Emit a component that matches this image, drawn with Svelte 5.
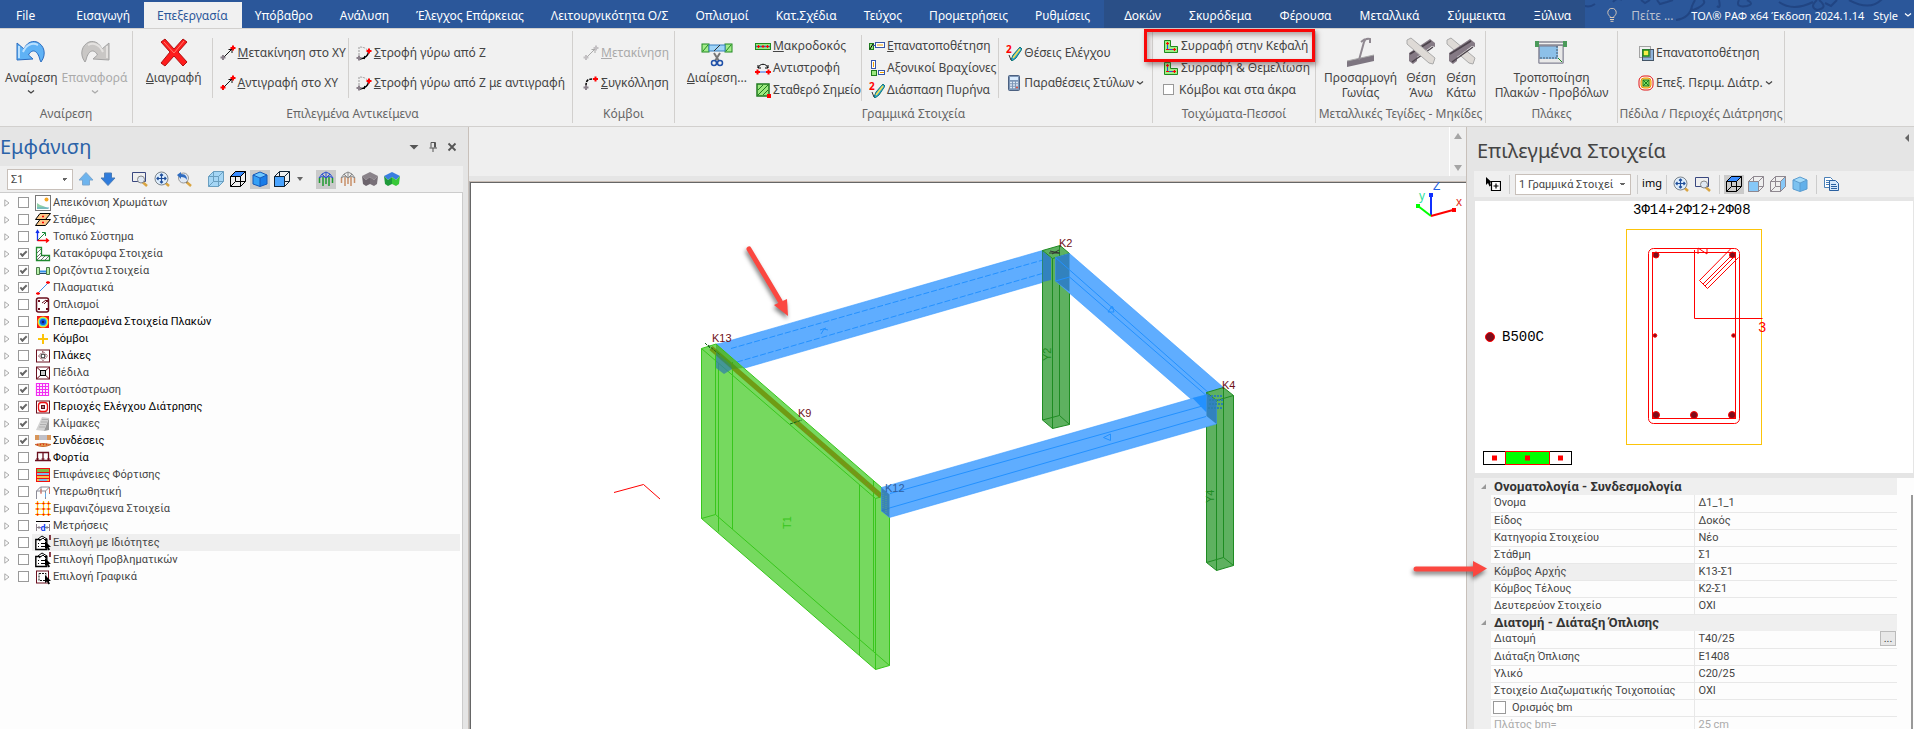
{#snippet ico(name: string, size = "s16")}
  <svg class="ico {size}" viewBox={size === "s32" ? "0 0 32 32" : "0 0 16 16"} aria-hidden="true">{@html icons[name]}</svg>
{/snippet}

{#snippet chevron()}
  <svg class="chevron" viewBox="0 0 8 6" aria-hidden="true"><path d="M1 1.5l3 2.5 3-2.5" /></svg>
{/snippet}

{#snippet small(icon: string, key: string, text: string, disabled = false, menu = false)}
  <button class="small" {disabled}>
    {@render ico(icon)}
    <span><u>{key}</u>{text}</span>
    {#if menu}{@render chevron()}{/if}
  </button>
{/snippet}

{#snippet large(icon: string, key: string, text: string, second = "", disabled = false, menu = false)}
  <button class="large" {disabled}>
    {@render ico(icon, "s32")}
    <span><u>{key}</u>{text}</span>
    {#if second}<span>{second}</span>{/if}
    {#if menu}{@render chevron()}{/if}
  </button>
{/snippet}

{#snippet tool(icon: string, label: string, active = false)}
  <button class="tool" class:active aria-label={label}>{@render ico(icon)}</button>
{/snippet}

<div class="app">
  <nav class="tabs">
    <svg class="swirl" viewBox="0 0 320 28" aria-hidden="true">
      <path d="M2 4q7 5 14 0M34 2q4-5 9-2M62 0l4 3 5-3M78 0l3 4 7-2 6-2M97 20q14-2 16-14M116 0q-8 14 3 8q9-5 5-8M138 6q4 4 2-6M160 0q-4 8 8 6q8-2 0-6M240 0q10 8-2 10q-8-3 0-10M246 3l6 3 6-6M200 2q14 10 34 0M270 0q22 12 34-2" />
    </svg>
    <button class="tab file">File</button>
    {#each tabs as tab}
      <button class="tab" class:selected={tab === selected} onclick={() => selected = tab}>{tab}</button>
    {/each}
    <div class="context">
      {#each contextTabs as tab}
        <button class="tab" class:selected={tab === selected} onclick={() => selected = tab}>{tab}</button>
      {/each}
    </div>
    <div class="app-info">
      <svg class="bulb" viewBox="0 0 10 14" aria-hidden="true"><path d="M3 9.5V8.500C1.500 7 .8 6 .8 4.500a4.200 4.200 0 0 1 8.400 0C9.200 6 8.500 7 7 8.500v1zM3 11.500h4M3.500 13.300h3" /></svg>
      <span class="tell">Πείτε ...</span>
      <span class="title">ΤΟΛ® ΡΑΦ x64 Έκδοση 2024.1.14</span>
      <button class="style">Style {@render chevron()}</button>
    </div>
  </nav>

  <div class="ribbon">
    <section class="group undo">
      <div class="body">
        {@render large("undo", "", "Αναίρεση", "", false, true)}
        {@render large("redo", "", "Επαναφορά", "", true, true)}
      </div>
      <h3>Αναίρεση</h3>
    </section>
    <section class="group selection">
      <div class="body">
        {@render large("delete", "Δ", "ιαγραφή")}
        <div class="col two">
          {@render small("move", "Μ", "ετακίνηση στο ΧΥ")}
          {@render small("copy", "Α", "ντιγραφή στο ΧΥ")}
        </div>
        <div class="col two">
          {@render small("rotate", "Σ", "τροφή γύρω από Ζ")}
          {@render small("rotate", "Σ", "τροφή γύρω από Ζ με αντιγραφή")}
        </div>
      </div>
      <h3>Επιλεγμένα Αντικείμενα</h3>
    </section>
    <section class="group joints">
      <div class="body">
        <div class="col two">
          {@render small("moveGray", "Μ", "ετακίνηση", true)}
          {@render small("weld", "Σ", "υγκόλληση")}
        </div>
      </div>
      <h3>Κόμβοι</h3>
    </section>
    <section class="group linear">
      <div class="body">
        {@render large("split", "Δ", "ιαίρεση...")}
        <div class="col first">
          {@render small("macro", "Μ", "ακροδοκός")}
          {@render small("reverse", "", "Αντιστροφή")}
          {@render small("fixed", "", "Σταθερό Σημείο")}
        </div>
        <div class="col">
          {@render small("reposition", "Ε", "πανατοποθέτηση")}
          {@render small("arms", "", "Αξονικοί Βραχίονες")}
          {@render small("core", "", "Διάσπαση Πυρήνα")}
        </div>
        <div class="col two">
          {@render small("core", "", "Θέσεις Ελέγχου")}
          {@render small("calc", "", "Παραθέσεις Στύλων", false, true)}
        </div>
      </div>
      <h3>Γραμμικά Στοιχεία</h3>
    </section>
    <section class="group walls">
      <div class="body">
        <div class="col">
          {@render small("stitch", "", "Συρραφή στην Κεφαλή")}
          {@render small("stitch", "", "Συρραφή & Θεμελίωση")}
          <label class="check"><input type="checkbox" />Κόμβοι και στα άκρα</label>
        </div>
      </div>
      <h3>Τοιχώματα-Πεσσοί</h3>
      <div class="highlight"></div>
    </section>
    <section class="group steel">
      <div class="body">
        {@render large("corner", "", "Προσαρμογή", "Γωνίας")}
        {@render large("above", "", "Θέση", "Άνω")}
        {@render large("below", "", "Θέση", "Κάτω")}
      </div>
      <h3>Μεταλλικές Τεγίδες - Μηκίδες</h3>
    </section>
    <section class="group slabs">
      <div class="body">
        {@render large("slab", "", "Τροποποίηση", "Πλακών - Προβόλων")}
      </div>
      <h3>Πλάκες</h3>
    </section>
    <section class="group footings">
      <div class="body">
        <div class="col two">
          {@render small("place", "", "Επανατοποθέτηση")}
          {@render small("perimeter", "", "Επεξ. Περιμ. Διάτρ.", false, true)}
        </div>
      </div>
      <h3>Πέδιλα / Περιοχές Διάτρησης</h3>
    </section>
  </div>

  <main>
    <aside class="display">
      <header>
        <h2>Εμφάνιση</h2>
        <button aria-label="Menu"><svg viewBox="0 0 12 12"><path class="solid" d="M1.500 4h9L6 8.500z" /></svg></button>
        <button aria-label="Pin"><svg viewBox="0 0 12 12"><path d="M4 1.500h4.500v5M4 1.500v5M7.500 1.500v5M2.500 7h7.500M6 7v4" /></svg></button>
        <button aria-label="Close"><svg viewBox="0 0 12 12"><path class="heavy" d="M2.500 2.500l7 7M9.500 2.500l-7 7" /></svg></button>
      </header>
      <div class="toolbar">
        <select aria-label="Στάθμη"><option>Σ1</option></select>
        {@render tool("up", "Up")}
        {@render tool("down", "Down")}
        <i class="space"></i>
        {@render tool("zoomWindow", "Zoom window")}
        {@render tool("zoomAll", "Zoom all")}
        {@render tool("zoomBack", "Zoom previous")}
        <i class="space"></i>
        {@render tool("cubeGlass", "Glass")}
        {@render tool("cubeTop", "Top")}
        {@render tool("cubeSolid", "Solid", true)}
        {@render tool("cubeFront", "Front")}
        <svg class="drop" viewBox="0 0 6 4" aria-hidden="true"><path d="M0 0h6L3 4z" /></svg>
        <i class="space"></i>
        {@render tool("frameColor", "Frame", true)}
        {@render tool("frameWire", "Wire")}
        {@render tool("frameGray", "Gray")}
        {@render tool("frameSolid", "Full")}
      </div>
      <ul class="tree">
        {#each tree as node}
          <li>
            <svg class="twist" viewBox="0 0 6 8" aria-hidden="true"><path d="M.8 .8v6.400L5 4z" /></svg>
            <label class:dark={node.dark} class:hot={node.hot}>
              <input type="checkbox" bind:checked={node.on} />
              <span class="entry">{@render ico(node.icon)}{node.text}</span>
            </label>
          </li>
        {/each}
      </ul>
    </aside>

    <section class="center">
      <div class="blank">
        <div class="scroller">
          <svg viewBox="0 0 8 6" aria-hidden="true"><path d="M0 6h8L4 0z" /></svg>
          <svg viewBox="0 0 8 6" aria-hidden="true"><path d="M0 0h8L4 6z" /></svg>
        </div>
      </div>
      <div class="canvas">
        <svg viewBox="470 182 996 547" aria-hidden="true">
          <polyline points="614,492.500 643.500,484.500 660,499" fill="none" stroke="#f00" />

          <!-- beam K13 - K2 -->
          <polygon class="beam" points="716,344 720,343.500 1042.500,250.500 1051,258 1051,280 724,374 716,367" />
          <path class="beam-line dashed" d="M731 348.500L1050 258M737 362L1044 273" />
          <path class="beam-line" d="M820 330l6-2M821 334l3-5 4 1" />

          <!-- column Y2 -->
          <polygon class="column" points="1042.500,250.500 1060,245.500 1069.500,253.500 1069.500,424.500 1052.500,428.500 1042.500,420" />
          <path class="column-line" d="M1042.500 250.500l10 8 17-5M1052.500 258.500v170M1059.500 246v169.500M1042.500 420l17-4.500 10 9" />
          <polygon class="overlap" points="1042.500,251 1051,258 1051,280 1042.500,282" />
          <path d="M1050 251l9 2M1052 254l7-4M1049 253h11" stroke="#333" fill="none" />

          <!-- beam K2 - K4 -->
          <polygon class="beam" points="1055.500,257.500 1069.500,253.500 1223.500,387.500 1223.500,410 1206.500,412.500 1055.500,281" />
          <polygon class="overlap" points="1055.500,257.500 1069.500,253.500 1069.500,292 1055.500,281" />
          <path class="beam-line" d="M1055.500 257.500L1210 394M1055.500 281l14-4L1208 397M1108 312l4-6 2 6zM1110 308l4 0" />

          <!-- column Y4 -->
          <polygon class="column" points="1206.500,392.500 1223.500,387.500 1233.500,395.500 1233.500,565.500 1216.500,570.500 1206.500,562.500" />
          <path class="column-line" d="M1206.500 392.500l10 8 17-5M1216.500 400.500v170M1223.500 388v169.500M1206.500 562.500l17-5 10 8" />

          <!-- wall T1 -->
          <polygon class="wall" points="701.500,348.500 716,344 889.500,494.500 889.500,665.500 875.500,669.500 701.500,518.500" />
          <path class="wall-line" d="M701.500 348.500l174 150v171M701.500 518.500l14-4 174 151M715.500 352v162.500M718.500 363v168.500M732.500 362v167M859.500 485v170M873.500 481v170M875.500 498.500l14-4" />
          <path d="M711 348L881 496" stroke="#6f9c14" stroke-width="5" />
          <path d="M790 418L880 495" stroke="#a06a30" stroke-dasharray="1 3" />
          <path d="M705 343l5 5M708 345l12 10M790 424l12-4" stroke="#17641a" stroke-dasharray="3 1" />
          <polygon points="716,352 731,365 732,369 724,374 716,368" fill="#3480a8" opacity=".75" />
          <polygon points="716,344 743,368 732,369 716,355" fill="#3a9a20" opacity=".55" />

          <!-- beam K12 - K4 -->
          <polygon class="beam" points="881.500,487.500 1206.500,394.500 1216.500,402 1216.500,424 889.500,517.500 881.500,511" />
          <path class="beam-line" d="M890 493.500L1206 405M881.500 511l8-3L1206 416.500M1103.500 437.500l7-3.500v6.500z" />
          <polygon points="1192.500,398 1206.500,394.500 1206.500,412.500" fill="#2391ff" />
          <polygon class="overlap" points="1206.500,393 1216.500,401 1216.500,424 1206.500,416" />
          <path d="M1208 396h14M1209 400h14M1209 404h14M1208 408h14" stroke="#2b80b0" stroke-width="2" stroke-dasharray="2 1" />
          <polygon points="881.500,487.500 889.500,494.500 889.500,517.500 881.500,511" fill="#2f78a8" opacity=".8" />
          <path d="M883 493v16M886 496v18" stroke="#57a887" stroke-dasharray="1 1" />

          <g class="node">
            <text x="712" y="342">K13</text>
            <text x="798" y="417">K9</text>
            <text x="1059" y="247">K2</text>
            <text x="1222" y="389">K4</text>
            <text class="covered" x="885" y="492">K12</text>
          </g>
          <g class="member">
            <text transform="translate(791 529) rotate(-90)" fill="#38c61c">T1</text>
            <text transform="translate(1051 361) rotate(-90)" fill="#1e8c22">Y2</text>
            <text transform="translate(1214 503) rotate(-90)" fill="#1e8c22">Y4</text>
          </g>

          <g class="axes">
            <path d="M1431 216v-21" stroke="#1030ff" /><rect x="1429" y="193" width="4" height="4" fill="#1030ff" />
            <path d="M1431 216l-13-10" stroke="#0f0" /><rect x="1416" y="204" width="4" height="4" fill="#0f0" />
            <path d="M1431 216l22-6" stroke="#f00" /><rect x="1452" y="208" width="4" height="4" fill="#f00" />
            <text x="1433" y="190" fill="#2060e0">Z</text>
            <text x="1419" y="200" fill="#30e0a0">y</text>
            <text x="1456" y="206" fill="#e03020">x</text>
          </g>

          <g class="pointer">
            <path d="M749 249l31 52" />
            <polygon points="774,305 787,299 788,316" />
          </g>
        </svg>
      </div>
    </section>

    <aside class="elements">
      <header>
        <h2>Επιλεγμένα Στοιχεία</h2>
        <svg class="collapse" viewBox="0 0 4 8" aria-hidden="true"><path d="M4 0v8L0 4z" /></svg>
      </header>
      <div class="toolbar">
        {@render tool("pick", "Pick")}
        <i class="line"></i>
        <select aria-label="Στοιχεία"><option>1 Γραμμικά Στοιχεί</option></select>
        <i class="line"></i>
        <button class="img">img</button>
        <i class="line"></i>
        {@render tool("zoomAll", "Zoom all")}
        {@render tool("zoomWindow", "Zoom window")}
        <i class="line"></i>
        {@render tool("cubeTop", "Top", true)}
        {@render tool("cubeFrontPale", "Front")}
        {@render tool("cubeSidePale", "Side")}
        {@render tool("cubeSolidPale", "Solid")}
        <i class="line"></i>
        {@render tool("pages", "Copy")}
      </div>
      <div class="preview">
        <svg viewBox="0 0 438 272" aria-hidden="true">
          <text x="158" y="13" fill="#000">3Φ14+2Φ12+2Φ08</text>
          <g fill="none" stroke="#f00">
            <rect x="151.500" y="28.500" width="135" height="215" stroke="#fcc40a" />
            <rect x="173.500" y="47.500" width="91" height="175" rx="5" />
            <rect x="177.500" y="51.500" width="83" height="166" />
            <path d="M219.500 49v68.500h68" />
            <path d="M255.500 48L224.500 79.500l8 8L263.500 56.500M228 83l28-28M230 85l28-28" />
            <path d="M223 53v-6l9 6v-6" />
          </g>
          <text x="283" y="131" fill="#f00">3</text>
          <g fill="#7d0d1c" stroke="#f00">
            <circle cx="181" cy="54" r="3" /><circle cx="257.500" cy="54" r="3" />
            <circle cx="180" cy="134.500" r="1.800" /><circle cx="258.500" cy="134.500" r="1.800" />
            <circle cx="181" cy="214" r="3.500" /><circle cx="219" cy="214" r="3.500" /><circle cx="257" cy="214" r="3.500" />
            <circle cx="15" cy="136" r="4.500" />
          </g>
          <text x="27" y="140" fill="#000">B500C</text>
          <rect x="8.500" y="250.500" width="88" height="13" fill="none" stroke="#000" />
          <rect x="30.500" y="250.500" width="44" height="13" fill="#0f0" stroke="#f00" />
          <path d="M17 254.500h5v5h-5zM50 254.500h5v5h-5zM83 254.500h5v5h-5z" fill="#f00" />
        </svg>
      </div>
      <div class="props">
        <table>
          <colgroup>
            <col class="gutter" />
            <col class="names" />
            <col />
          </colgroup>
          <tbody>
            {#each props as row}
              {#if row.head}
                <tr class="head"><th colspan="3"><svg viewBox="0 0 5 5" aria-hidden="true"><path d="M5 0v5H0z" /></svg>{row.name}</th></tr>
              {:else}
                <tr class:current={row.current} class:off={row.off}>
                  <td class="gutter"></td>
                  <td class="name">
                    {#if row.check}
                      <label><input type="checkbox" />{row.name}</label>
                    {:else}
                      {row.name}
                    {/if}
                  </td>
                  <td class="value">{row.value}{#if row.more}<button class="more">...</button>{/if}</td>
                </tr>
              {/if}
            {/each}
          </tbody>
        </table>
        <div class="thumb"></div>
      </div>
      <svg class="pointer-row" viewBox="0 0 84 30" aria-hidden="true">
        <path d="M6 12h60" />
        <polygon points="63,4 77,11.500 63,20" />
      </svg>
    </aside>
  </main>
</div>

<script lang="ts">
  type Node = {icon: string, text: string, on?: boolean, dark?: boolean, hot?: boolean};
  type Prop = {name: string, value?: string, head?: boolean, current?: boolean, off?: boolean, check?: boolean, more?: boolean};

  const tabs = [
    "Εισαγωγή", "Επεξεργασία", "Υπόβαθρο", "Ανάλυση", "Έλεγχος Επάρκειας",
    "Λειτουργικότητα Ο/Σ", "Οπλισμοί", "Κατ.Σχέδια", "Τεύχος", "Προμετρήσεις", "Ρυθμίσεις"
  ];
  const contextTabs = ["Δοκών", "Σκυρόδεμα", "Φέρουσα", "Μεταλλικά", "Σύμμεικτα", "Ξύλινα"];

  let selected = $state("Επεξεργασία");

  let tree: Node[] = $state([
    {icon: "colors", text: "Απεικόνιση Χρωμάτων", on: false},
    {icon: "levels", text: "Στάθμες", on: false},
    {icon: "local", text: "Τοπικό Σύστημα", on: false},
    {icon: "vertical", text: "Κατακόρυφα Στοιχεία", on: true},
    {icon: "horizontal", text: "Οριζόντια Στοιχεία", on: true},
    {icon: "fictive", text: "Πλασματικά", on: true},
    {icon: "rebar", text: "Οπλισμοί", on: false},
    {icon: "fem", text: "Πεπερασμένα Στοιχεία Πλακών", on: false, dark: true},
    {icon: "nodes", text: "Κόμβοι", on: true, dark: true},
    {icon: "plates", text: "Πλάκες", on: false, dark: true},
    {icon: "footing", text: "Πέδιλα", on: true},
    {icon: "raft", text: "Κοιτόστρωση", on: true},
    {icon: "punching", text: "Περιοχές Ελέγχου Διάτρησης", on: true, dark: true},
    {icon: "stairs", text: "Κλίμακες", on: true},
    {icon: "links", text: "Συνδέσεις", on: true, dark: true},
    {icon: "loads", text: "Φορτία", on: false, dark: true},
    {icon: "surfaces", text: "Επιφάνειες Φόρτισης", on: false},
    {icon: "pushover", text: "Υπερωθητική", on: false},
    {icon: "shown", text: "Εμφανιζόμενα Στοιχεία", on: false},
    {icon: "measure", text: "Μετρήσεις", on: false},
    {icon: "byProps", text: "Επιλογή με Ιδιότητες", on: false, hot: true},
    {icon: "byProps", text: "Επιλογή Προβληματικών", on: false},
    {icon: "byGraph", text: "Επιλογή Γραφικά", on: false}
  ]);

  const props: Prop[] = [
    {name: "Ονοματολογία - Συνδεσμολογία", head: true},
    {name: "Όνομα", value: "Δ1_1_1"},
    {name: "Είδος", value: "Δοκός"},
    {name: "Κατηγορία Στοιχείου", value: "Νέο"},
    {name: "Στάθμη", value: "Σ1"},
    {name: "Κόμβος Αρχής", value: "Κ13-Σ1", current: true},
    {name: "Κόμβος Τέλους", value: "Κ2-Σ1"},
    {name: "Δευτερεύον Στοιχείο", value: "ΟΧΙ"},
    {name: "Διατομή - Διάταξη Όπλισης", head: true},
    {name: "Διατομή", value: "Τ40/25", more: true},
    {name: "Διάταξη Όπλισης", value: "Ε1408"},
    {name: "Υλικό", value: "C20/25"},
    {name: "Στοιχείο Διαζωματικής Τοιχοποιίας", value: "ΟΧΙ"},
    {name: "Ορισμός bm", value: "", check: true},
    {name: "Πλάτος bm=", value: "25 cm", off: true}
  ];

  // a cube drawn as its twelve edges under one filled face
  const cube = (face: string, fill: string, edge: string) =>
    `<path d="M.5 5.500h10v10H.5zM5.500 .5h10v10h-10zM.5 5.500l5-5M10.500 5.500l5-5M10.500 15.500l5-5M.5 15.500l5-5" fill="none" stroke="${edge}"/><path d="${face}" fill="${fill}" stroke="${edge}"/>`;
  const solid = (left: string, right: string, top: string, edge: string) =>
    `<path d="M1 4l7 3v8.500L1 13z" fill="${left}"/><path d="M15 4L8 7v8.500l7-2.500z" fill="${right}"/><path d="M1 4l7-3 7 3-7 3z" fill="${top}"/><path d="M1 4l7-3 7 3v9l-7 2.500L1 13zl7 3 7-3M8 7v8" fill="none" stroke="${edge}"/>`;
  const frame = (top: string, post: string) =>
    `<path d="M1 7l3-4 4-2 4 2 3 4M1 7l4-2 3 2 3-2 4 2M4 3l4 4 4-4M8 1v6" fill="none" stroke="${top}"/><path d="M1.500 7v5M5 6v9M8 7v6M11 6v9M14.500 7v5" stroke="${post}" stroke-width="1.500"/>`;
  const block = (top: string, left: string, right: string) =>
    `<path d="M0 5l8-4 8 4-4 4-4-3-4 3z" fill="${top}"/><path d="M0 5l4 4v6l-3-2zM4 9l4-3v7l-4 2z" fill="${left}"/><path d="M16 5l-4 4v6l3-2zM12 9L8 6v7l4 2z" fill="${right}"/>`;
  const lens = `<path d="M10.500 11l4.500 4" stroke="#d9a441" stroke-width="2.500"/><path d="M9.500 10l1.500 1.500" stroke="#555" stroke-width="2"/>`;
  const cross = (x: number, y: number, color: string) =>
    `<path d="M${x - 2.500} ${y}h5M${x} ${y - 2.500}v5" stroke="${color}" stroke-width="2"/>`;
  const hatch = (x: number, y: number, w: number, h: number) =>
    `<rect x="${x}" y="${y}" width="${w}" height="${h}" fill="#a5ec8c" stroke="#1f8a1f"/><path d="M${x + 1} ${y + h - 1}L${x + w - 1} ${y + 1}" stroke="#1f8a1f"/>`;
  const cursor = `<path d="M10 6v8l2-1.500 1.500 3 1.500-1-1.500-2.500H16z" fill="#000"/>`;
  const steel = `<path d="M4 17L25 3l5 4v4l-3-1-15 11v4l-4 3-4-3z" fill="#857a85"/><path d="M5 18l21-13M7 26L28 11" stroke="#4c444c" stroke-width="1.500"/>`;
  const rail = `<path d="M2 4l4-2 24 20-2 6-4-1L2 8z" fill="#dedad6" stroke="#aaa"/>`;

  const icons: Record<string, string> = {
    undo: `<path d="M2 7v17l16-1-4.500-4c3-6 9-6 11.500 5l1 2c6-8 3-17-4-20-6-2-11 2-13 7z" fill="#5fb2f5" stroke="#2b6cc0"/><path d="M4 10v12M8 16c3-7 9-10 15-7" stroke="#b9e0ff" stroke-width="2" fill="none"/>`,
    redo: `<path d="M30 7v17l-16-1 4.500-4c-3-6-9-6-11.500 5l-1 2c-6-8-3-17 4-20 6-2 11 2 13 7z" fill="#c9c7c5" stroke="#a3a3a3"/><path d="M28 10v12M24 16c-3-7-9-10-15-7" stroke="#e4e2e0" stroke-width="2" fill="none"/>`,
    delete: `<path d="M7 3l9 10 9-10 4 3-9 10 9 10-4 4-9-10-9 10-4-3 9-11L3 6z" fill="#ff1d1d" stroke="#b01010"/><path d="M6 6l10 11L26 5" stroke="#ff7b6b" fill="none"/>`,
    move: `<path d="M3 13L12 4M8.500 4.500H12V8" stroke="#111" fill="none"/>${cross(3, 12.500, "#8a808a")}${cross(13, 3, "#f00")}`,
    moveGray: `<path d="M3 13L12 4M8.500 4.500H12V8" stroke="#999" fill="none"/>${cross(3, 12.500, "#b8b4b8")}${cross(13, 3, "#b8b4b8")}`,
    copy: `<path d="M3 13L12 4M8.500 4.500H12V8" stroke="#111" fill="none"/>${cross(3, 12.500, "#f00")}${cross(13, 3, "#f00")}`,
    rotate: `<path d="M3 10V2q7 0 9 4" stroke="#999" stroke-dasharray="2 1" fill="none"/><path d="M4 14c6-1 8-3 8.500-7M9 11l-1 3" stroke="#000" stroke-width="1.500" fill="none"/>${cross(3, 13, "#8a808a")}${cross(13, 6, "#f00")}`,
    weld: `<path d="M3 11c0-6 2-7 7-7" stroke="#000" stroke-width="1.500" stroke-dasharray="3 1" fill="none"/>${cross(12.500, 4, "#f00")}${cross(3, 12.500, "#8a808a")}`,
    split: `${hatch(1, 8, 7, 8)}${hatch(24, 8, 7, 8)}<rect x="8" y="9" width="16" height="6" fill="#9fd4f8" stroke="#3880c0"/><path d="M13 15l6-6" stroke="#333"/><path d="M13 17l5 8M19 17l-5 8" stroke="#777" stroke-width="2"/><circle cx="13" cy="27" r="2.500" fill="none" stroke="#1f50a8" stroke-width="1.500"/><circle cx="19" cy="27" r="2.500" fill="none" stroke="#1f50a8" stroke-width="1.500"/>`,
    macro: `<rect x=".5" y="5.500" width="15" height="6" fill="#9ce87f" stroke="#1f8a1f"/><path d="M1 8.500h14" stroke="#2a68c8" stroke-width="1.500"/><path d="M2 8.500h3M6.500 8.500h3M11 8.500h3M3.500 7v3M8 7v3M12.500 7v3" stroke="#f00"/>`,
    reverse: `<path d="M1 12h14" stroke="#2a68e8"/><path d="M3 8c2-5 8-5 10 0M3 5v3h3M13 5v3h-3" stroke="#000" fill="none"/>${cross(2.500, 12, "#f00")}${cross(13.500, 12, "#f00")}`,
    fixed: `<rect x="2" y="2" width="12" height="12" fill="#9ce87f" stroke="#1f7a1f" stroke-width="1.500"/><path d="M3 13L13 3M3 8l5-5M8 13l5-5" stroke="#1f7a1f"/><rect x="12" y="12" width="4" height="4" fill="#f00"/>`,
    reposition: `<rect x=".5" y="5.500" width="4" height="6" fill="#9ce87f" stroke="#1f7a1f"/><path d="M1 11l3-5" stroke="#000"/><path d="M4 7.500h3" stroke="#3856a8"/><rect x="6.500" y="4.500" width="9" height="5" fill="#fff" stroke="#3856a8"/><path d="M8 7h6" stroke="#f0a000"/>`,
    arms: `<rect x="2.500" y=".5" width="4" height="8" fill="#fff" stroke="#3856a8"/><path d="M4.500 2v5" stroke="#f0a000"/><rect x="2.500" y="10.500" width="5" height="5" fill="#9ce87f" stroke="#1f7a1f"/><rect x="9.500" y="10.500" width="6" height="4" fill="#fff" stroke="#3856a8"/><path d="M11 12.500h4" stroke="#f0a000"/>`,
    core: `<path d="M5 15l2-5 7-8 2 2-6 9-4 3z" fill="#2aa4d8" stroke="#177"/><path d="M7 13l7-9" stroke="#ffe14a" stroke-width="1.500"/><path d="M3 10l2 5" stroke="#333"/><text x="0" y="8" font-size="10" font-weight="700" fill="#f00">2</text>`,
    calc: `<rect x="2.500" y=".5" width="11" height="15" rx="1" fill="#7e97b8" stroke="#4b6080"/><rect x="4" y="2" width="8" height="3" fill="#d9ecff"/><path d="M4 7.500h8M4 10h8M4 12.500h8" stroke="#dfe8f4" stroke-width="1.500" stroke-dasharray="2 1"/><path d="M10 12.500h2" stroke="#e05040" stroke-width="1.500"/>`,
    stitch: `<path d="M1.500 2.500h6v6h7v6h-13z" fill="#9ff085" stroke="#1f8a1f"/><path d="M4.500 4v7.500h8" stroke="#2a48e8" fill="none"/><path d="M3 5.500h3M4.500 4v3M3 11.500h3M9.500 11.500h3.500M11.500 10v3" stroke="#f00" stroke-width="1.200"/>`,
    corner: `<path d="M2 25l27-6v6L2 31z" fill="#7d7580"/><path d="M2 25l27-6" stroke="#aaa"/><path d="M14 24L19 6q1-4 6-3v4M20 3l-4 3" fill="none" stroke="#8f8890" stroke-width="2"/>`,
    above: `${steel}${rail}`,
    below: `${rail}${steel}`,
    slab: `<path d="M2 6h29M2 9h29" stroke="#556"/><rect x="4" y="10" width="24" height="17" fill="#8cc0e8" stroke="#778"/><path d="M22 10v12H4" stroke="#456" stroke-dasharray="2 1" fill="none"/><path d="M23 10h5v17H4v-4h19z" fill="#e8e8e8"/><path d="M4 10v17h24V10" stroke="#889" fill="none"/><rect x="0" y="5" width="4" height="6" fill="#4a9a5a"/><rect x="28" y="5" width="4" height="6" fill="#4a9a5a"/><path d="M23 22l4 4" stroke="#1a8a1a"/>`,
    place: `<rect x="4.500" y="4.500" width="11" height="11" fill="#8fb4dc" stroke="#456"/><rect x="1.500" y="1.500" width="11" height="11" fill="none" stroke="#555" stroke-dasharray="1 1"/><rect x="5" y="5" width="6" height="6" fill="#f7f04a" stroke="#1f8a1f" stroke-width="1.500"/>`,
    perimeter: `<rect x="1" y="1" width="14" height="14" rx="5" fill="#fff" stroke="#e01010"/><rect x="3" y="3" width="10" height="10" rx="3" fill="#fbe06a" stroke="#f09000"/><rect x="5" y="5" width="6" height="6" fill="#7fe060" stroke="#1f7a1f"/><path d="M5 11l6-6M5 5l6 6" stroke="#1f7a1f"/>`,

    up: `<path d="M8 1.500L15 9h-3.500v5h-7V9H1z" fill="#6db4ee" stroke="#7ba7d0"/>`,
    down: `<path d="M8 14.500L15 7h-3.500V2h-7v5H1z" fill="#2f7cdc" stroke="#4a7cb8"/>`,
    zoomWindow: `<path d="M.5 1.500h13v9H.5z" fill="none" stroke="#3a4880"/>${lens}<circle cx="9" cy="8.500" r="3.500" fill="#dfe8f4" stroke="#888"/>`,
    zoomAll: `${lens}<circle cx="7.500" cy="7.500" r="6.500" fill="#dfeefc" stroke="#7d858c"/><path d="M7.500 3v9M3 7.500h9M6 4.500l1.500-1.500L9 4.500M6 10.500L7.500 12 9 10.500M4.500 6L3 7.500 4.500 9M10.500 6L12 7.500 10.500 9" stroke="#1f4e9a" fill="none" stroke-width="1.200"/>`,
    zoomBack: `${lens}<circle cx="7.500" cy="7" r="5" fill="#dfe8f4" stroke="#999"/><path d="M1 4l4-3v2c5 0 6 3 6 6-1-2-3-3-6-3v2z" fill="#2f6cc0"/>`,
    cubeGlass: `<path d="M.5 5.500l5-5h10v10l-5 5H.5z" fill="#a5d6f5" stroke="#6a9fc0"/><path d="M.5 5.500h10v10M10.500 5.500l5-5M5.500 .5v10h10M.5 15.500l5-5" fill="none" stroke="#6a9fc0"/>`,
    cubeTop: cube("M.5 5.500l5-5h10l-5 5z", "#3a8cff", "#000"),
    cubeSolid: solid("#35a0f5", "#1a7ce8", "#6cc6ff", "#1358b8"),
    cubeFront: cube("M.5 5.500h10v10H.5z", "#4aa4ff", "#123"),
    cubeFrontPale: cube("M.5 5.500h10v10H.5z", "#86c8f8", "#8f8890"),
    cubeSidePale: cube("M10.500 5.500l5-5v10l-5 5z", "#86c8f8", "#8f8890"),
    cubeSolidPale: solid("#7cc2f0", "#62b0ea", "#a5dcfa", "#5a9cd0"),
    frameColor: frame("#2a50d0", "#1f9a2f"),
    frameWire: frame("#888", "#c8906a"),
    frameGray: block("#8a838a", "#6c646c", "#787078"),
    frameSolid: block("#3a7ee0", "#1f9a3a", "#38c838"),
    pick: `<path d="M1 1v8l2-2 1.500 3.500 1.500-1L5 6.500h2z" fill="#000"/><path d="M6.500 5.500h9v9h-9zM11 7.500v5M8.500 10h5" fill="#fff" stroke="#000" stroke-width="1.200"/>`,
    pages: `<path d="M1.500 1.500h6l2 2v8h-8z" fill="#fff" stroke="#4a80b8"/><path d="M3 4.500h4M3 6.500h4M3 8.500h3" stroke="#4a80b8"/><path d="M6.500 4.500h6l3 3v7h-9z" fill="#d5e8fa" stroke="#2a60a0"/><path d="M8 8.500h5M8 10.500h6M8 12.500h6" stroke="#2a60a0"/>`,

    colors: `<rect x=".5" y=".5" width="15" height="15" fill="#fff" stroke="#777"/><circle cx="11.500" cy="4.500" r="2" fill="#f5a623"/><path d="M2 8l3 2 3 1 5 2v1H2z" fill="#8fd0a8"/><path d="M2 13h12" stroke="#60a8d0"/>`,
    levels: `<path d="M5 1.500h10.500l-5 6H.5zM5 7.500h10.500l-5 6H.5z" fill="#fbc98c" stroke="#000"/><path d="M7 4.500h2M7 10.500h2" stroke="#f00" stroke-width="1.500"/>`,
    local: `<path d="M2.500 12V2M1 4l1.500-2.500L4 4" stroke="#1030f0" fill="none" stroke-width="1.300"/><path d="M3 11l7-7M7 3.500h3.500V7" stroke="#1a8a3a" fill="none"/><path d="M2.500 11.500h11M11 9.500l2.500 2-2.500 2" stroke="#f00" fill="none" stroke-width="1.300"/>`,
    vertical: `<path d="M1.500 1.500h5v8h8v5h-13z" fill="#fff" stroke="#1f8a2f" stroke-width="1.300"/><path d="M2 7l4-4M2 11l4-4M2 14l5-5M6 14l4-4M10 14l4-4" stroke="#333" stroke-width=".7"/>`,
    horizontal: `<path d="M1.500 4.500h3v7h-3zM11.500 4.500h3v7h-3z" fill="#b8f0a8" stroke="#4a7a4a"/><path d="M5 8.500h6" stroke="#3090e8" stroke-width="2"/><path d="M5 10.500h6" stroke="#246"/>`,
    fictive: `<path d="M3 13L13 3" stroke="#3a90e8"/><path d="M1 13.500h4M3 12v3M11 2.500h4M13 1v3" stroke="#f00" stroke-width="1.300"/>`,
    rebar: `<rect x="1.500" y="1" width="12" height="14" rx="2" fill="#fff" stroke="#6a0f1e" stroke-width="1.500"/><path d="M7 6l4-3M9 7l3-3" stroke="#6a0f1e"/><path d="M3 3h2v2H3zM11 3h2v2h-2zM3 11h2v2H3zM11 11h2v2h-2z" fill="#6a0f1e"/>`,
    fem: `<rect x="2" y="2" width="12" height="12" fill="#f01818"/><circle cx="8" cy="8" r="5.500" fill="#f8e020"/><circle cx="8" cy="8" r="4.200" fill="#30d0e0"/><circle cx="8" cy="8" r="3" fill="#1050e0"/><circle cx="8" cy="8" r="1.200" fill="#102060"/>`,
    nodes: `<path d="M3 8h10M8 3v10" stroke="#fcc40a" stroke-width="2"/>`,
    plates: `<rect x="1.500" y="2" width="13" height="12" fill="#fff" stroke="#6a0f1e"/><path d="M8 3.500L12.500 8 8 12.500 3.500 8z" fill="none" stroke="#6a0f1e" stroke-dasharray="2 1"/><circle cx="8" cy="8" r="2" fill="none" stroke="#111"/>`,
    footing: `<rect x="1.500" y="2" width="13" height="12" fill="#fff" stroke="#6a0f1e"/><path d="M2 2.500l12 11M14 2.500l-12 11" stroke="#6a0f1e"/><rect x="5.500" y="5.500" width="5" height="5" fill="#ccc" stroke="#000"/>`,
    raft: `<path d="M1.500 1.500h12v12h-12zM4.500 2v12M7.500 2v12M10.500 2v12M1 4.500h13M1 7.500h13M1 10.500h13" fill="none" stroke="#f22cf2" stroke-width="1.200"/>`,
    punching: `<rect x="1.500" y="2" width="13" height="12" fill="#fff" stroke="#6a0f1e"/><rect x="3.500" y="3.500" width="9" height="9" rx="3" fill="none" stroke="#f01010" stroke-width="1.300"/><rect x="6.500" y="6.500" width="3" height="3" fill="#a08080" stroke="#601018"/>`,
    stairs: `<path d="M7 1l7 1-5 13-8-1z" fill="#d2d2d2"/><path d="M14 2v12l-5 1z" fill="#9a9a9a"/><path d="M7 3.500h6M6 6h6M5 8.500h6M4 11h6" stroke="#b0b0b0"/>`,
    links: `<rect x="0" y="2" width="16" height="5" fill="#d8965a"/><path d="M4 4.500h8" stroke="#c0c0c8" stroke-width="5"/><path d="M0 11.500q8-2 16 0-8 4-16 0z" fill="#e8a050" stroke="#c86a30"/><path d="M2 11.500h12" stroke="#e03020" stroke-width="1.500" stroke-dasharray="1 2"/>`,
    loads: `<path d="M2.500 10V2.500h11V10M8 2.500V10M0 10.500h16" fill="none" stroke="#6a0f1e" stroke-width="1.300"/><path d="M1 9h3M6.500 9h3M12 9h3" stroke="#6a0f1e"/>`,
    surfaces: `<rect x="1.500" y="1.500" width="13" height="13" fill="#f5c04a" stroke="#f01010"/><rect x="2" y="2" width="12" height="3" fill="#80b840"/><path d="M1 5.500h14M1 8.500h14M1 11.500h14" stroke="#f01010"/><path d="M2 7h12M4 13h8" stroke="#80b8e8" stroke-width="2"/>`,
    pushover: `<path d="M1.500 15V7l4-4h9v7M10.500 7v8M1.500 7h9l4-4M6 3v6" fill="none" stroke="#8a8a96"/><path d="M6 5v5M14.500 4v5" stroke="#e07060"/><path d="M10.500 9v4" stroke="#60a8e8"/>`,
    shown: `<path d="M2.500 0v15M8.500 0v15M13.500 0v15M0 2.500h16M0 8h16M0 13.500h16" stroke="#fcb90a" stroke-width="1.200"/><path d="M1.500 2.500h2M7.500 2.500h2M12.500 2.500h2M1.500 8h2M7.500 8h2M12.500 8h2M1.500 13.500h2M7.500 13.500h2M12.500 13.500h2" stroke="#f00" stroke-width="1.600"/>`,
    measure: `<path d="M1 3.500h14" stroke="#000"/><path d="M1.500 6v7M14.500 6v7M2 9.500h4M10 9.500h4M4 8v3M12 8v3" stroke="#8a808a"/><text x="5.500" y="13" font-size="9" font-weight="700" fill="#1040f0">d</text>`,
    byProps: `<path d="M.8 4.500h11v10H.8z" fill="#fff" stroke="#000" stroke-width="1.400"/><path d="M3 4l4-3 5 3M4 6l4-3 3 3" fill="#fff" stroke="#000"/><path d="M3 8.500h1M6 8.500h4M3 11.500h1M6 11.500h4" stroke="#000"/><path d="M15 0v5" stroke="#6a0f1e" stroke-width="1.600"/>${cursor}`,
    byGraph: `<rect x="1.500" y="2" width="12" height="12" fill="#fff" stroke="#6a0f1e"/><rect x="4" y="4.500" width="7" height="7" fill="none" stroke="#111" stroke-dasharray="2 1"/>${cursor}`
  };
</script>

<style>
  :global(body) {overflow: hidden}

  .app {
    display: flex;
    flex-direction: column;
    height: 100vh;
    background: #e5e5e5;
    color: #444;
    font: 12px/15px "Noto Sans", "Open Sans", sans-serif;
  }

  button {
    margin: 0;
    padding: 0;
    border: 0;
    background: none;
    color: inherit;
    font: inherit;
  }
  h2, h3, ul {margin: 0; padding: 0; font-weight: 400}
  svg {display: block; flex: none}

  /* tab strip */
  .tabs {
    position: relative;
    display: flex;
    flex: none;
    height: 28px;
    background: #2b579a;
    color: #fff;
    white-space: nowrap;
  }
  .swirl {
    position: absolute;
    right: 15px;
    top: 0;
    width: 320px;
    height: 28px;
    fill: none;
    stroke: #214583;
    stroke-width: 2;
  }
  .tab {
    margin-top: 2px;
    padding: 0 14px 0 13px;
    height: 26px;
  }
  .tab.file {padding: 0 28px 0 16px}
  .tab.selected {background: #f1f1f1; color: #2b579a}
  .context {
    position: relative;
    display: flex;
    margin-left: auto;
    padding-left: 6px;
    background: #2a4f87;
  }
  .context .tab {padding: 0 14px}
  .app-info {
    position: relative;
    display: flex;
    align-items: center;
    box-sizing: border-box;
    width: 332px;
    padding: 2px 2px 0 22px;
    font-size: 11px;
  }
  .bulb {
    width: 10px;
    height: 14px;
    margin-right: 14px;
    fill: none;
    stroke: #d8c8b8;
  }
  .tell {width: 60px; color: #b9c0cf; font-size: 12px}
  .style {display: flex; align-items: center; gap: 6px; margin-left: auto}

  .chevron {
    width: 8px;
    height: 6px;
    fill: none;
    stroke: currentColor;
    stroke-width: 1.3;
  }

  /* ribbon */
  .ribbon {
    display: flex;
    flex: none;
    padding: 2px 0 3px;
    background: #f1f1f1;
    border-top: 1px solid #d2d0ce;
    border-bottom: 1px solid #d2d0ce;
    white-space: nowrap;
  }
  .group {
    position: relative;
    box-sizing: border-box;
    flex: none;
    border-right: 1px solid #d2d0ce;
  }
  .group h3 {
    text-align: center;
    color: #666;
    font-size: 12px;
    line-height: 19px;
  }
  .body {
    display: flex;
    height: 73px;
  }
  .undo {width: 133px}
  .selection {width: 440px}
  .joints {width: 102px}
  .linear {width: 478px}
  .walls {width: 163px}
  .steel {width: 170px}
  .slabs {width: 132px}
  .footings {width: 167px}
  .joints .body, .walls .body, .undo .body {padding-left: 3px}
  .steel .body, .slabs .body {justify-content: center}
  .footings .body {padding-left: 13px}

  .large {
    display: flex;
    flex: none;
    flex-direction: column;
    align-items: center;
    align-self: flex-start;
    padding: 5px 4px 0;
  }
  .large span {line-height: 15px}
  .large .ico {margin-bottom: 2px}
  .large .chevron {margin-top: 4px}
  .undo .large {padding: 5px 2px 0}
  .selection .large {padding: 5px 10px 0 13px}
  .linear .large {padding: 5px 3px 0 12px}
  .col {
    display: flex;
    flex: none;
    flex-direction: column;
    align-self: center;
    padding: 0 2px 0 7px;
  }
  .linear .first {padding: 0 0 0 5px}
  .col + .col, .selection .large + .col {border-left: 1px solid #d2d0ce}
  .small {
    display: flex;
    align-items: center;
    gap: 2px;
    height: 22px;
  }
  .two .small {height: 30px}
  button:disabled {color: #aaa}
  .small:disabled .ico {opacity: .8}
  .check {
    display: flex;
    align-items: center;
    gap: 5px;
    height: 22px;
  }
  .highlight {
    position: absolute;
    left: -9px;
    top: -2px;
    width: 165px;
    height: 27px;
    border: 3px solid #f80808;
    box-shadow: 2px 3px 5px rgba(80, 50, 50, .5), inset 2px 3px 5px rgba(80, 50, 50, .4);
  }

  .s16 {width: 16px; height: 16px}
  .s32 {width: 32px; height: 32px}

  input[type="checkbox"] {
    appearance: none;
    display: grid;
    box-sizing: border-box;
    flex: none;
    width: 11px;
    height: 11px;
    margin: 0;
    border: 1px solid #999;
    background: #fff;
  }
  input[type="checkbox"]:checked::before {
    content: "";
    width: 5px;
    height: 2px;
    margin: 2px 1px;
    border: solid #666;
    border-width: 0 0 2px 2px;
    transform: rotate(-45deg);
  }

  main {
    display: flex;
    flex: 1;
    min-height: 0;
  }
  header {display: flex}
  header h2 {
    flex: 1;
    font-size: 20px;
    line-height: 28px;
    white-space: nowrap;
  }
  .toolbar {
    display: flex;
    align-items: center;
    background: #efefef;
  }
  .tool {
    display: grid;
    place-items: center;
    width: 20px;
    height: 19px;
    margin-right: 2px;
  }
  .tool.active {background: #cacaca}
  .space {width: 10px}
  .line {width: 1px; height: 19px; background: #ccc}
  .drop {width: 6px; height: 4px; margin: 0 3px; fill: #666}
  select {
    appearance: none;
    box-sizing: border-box;
    height: 21px;
    padding: 0 14px 0 3px;
    border: 1px solid #c8c0ba;
    border-radius: 0;
    background:
      linear-gradient(45deg, transparent 50%, #666 50%) right 7px center / 3px 3px no-repeat,
      linear-gradient(135deg, #666 50%, transparent 50%) right 4px center / 3px 3px no-repeat,
      #fff;
    color: #444;
    font: 11px "Roboto", sans-serif;
  }

  /* display tree */
  .display {
    box-sizing: border-box;
    display: flex;
    flex-direction: column;
    flex: none;
    width: 469px;
    border-right: 1px solid #c8c0ba;
  }
  .display header {
    box-sizing: border-box;
    height: 39px;
    padding: 6px 7px 5px 0;
    color: #2b62a8;
  }
  .display header button {
    display: grid;
    place-items: center;
    width: 19px;
    height: 28px;
  }
  .display header svg {width: 12px; height: 12px; fill: none; stroke: #555}
  .display header .solid {fill: #555; stroke: none}
  .display header .heavy {stroke-width: 1.8}
  .display .toolbar {
    height: 26px;
    margin-right: 5px;
    padding-left: 7px;
  }
  .display select {width: 66px; margin-right: 3px}
  .tree {
    flex: 1;
    min-height: 0;
    margin-right: 5px;
    padding-top: 1px;
    border-top: 1px solid #ccc;
    border-right: 1px solid #ccc;
    background: #fdfdfd;
    list-style: none;
    font: 11px/17px "Roboto", sans-serif;
  }
  .tree li {display: flex; align-items: center; height: 17px}
  .twist {width: 6px; height: 8px; margin: 0 8px 0 4px; fill: none; stroke: #aaa}
  .tree label {display: flex; flex: 1; align-items: center}
  .entry {
    display: flex;
    flex: 1;
    align-items: center;
    gap: 2px;
    margin: 0 2px 0 3px;
    padding-left: 3px;
  }
  .dark {color: #000}
  .hot .entry {background: #efefef}

  /* drawing area */
  .center {
    display: flex;
    flex-direction: column;
    flex: 1;
    min-width: 0;
    border-right: 1px solid #c8c0ba;
  }
  .blank {
    display: flex;
    justify-content: flex-end;
    height: 49px;
    background: #efefef;
  }
  .scroller {
    display: flex;
    flex-direction: column;
    justify-content: space-between;
    align-items: center;
    width: 16px;
    padding: 6px 0 5px;
    border-left: 1px solid #fff;
  }
  .scroller svg {width: 8px; height: 6px; fill: #a5a5a5}
  .canvas {
    flex: 1;
    min-height: 0;
    margin-top: 5px;
    border-top: 1px solid #c8bdb5;
    border-left: 1px solid #aaa;
    background: #fff;
    box-shadow: inset 1px 1px #666;
  }
  .canvas svg {width: 100%; height: 100%}
  .beam {fill: #5fadff; stroke: #3a9bff; stroke-width: .6}
  .beam-line {fill: none; stroke: #2391ff}
  .dashed {stroke-dasharray: 6 2}
  .column {fill: #5eb160; stroke: #1e8c22}
  .column-line {fill: none; stroke: #1e8c22}
  .overlap {fill: #3282be}
  .wall {fill: #76d95f; stroke: #38c61c}
  .wall-line {fill: none; stroke: #38c61c}
  .node, .member {font: 11px "Liberation Sans", sans-serif}
  .node {fill: #701018}
  .covered {fill: #2f5f9f}
  .axes {font: 12px "Liberation Sans", sans-serif; stroke-width: 2}
  .axes text {stroke: none}
  .pointer path {stroke: #fb4740; stroke-width: 5; stroke-linecap: round}
  .pointer polygon {fill: #fb4740}
  .pointer, .pointer-row {filter: drop-shadow(-1px 3px 2px rgba(0, 0, 0, .5))}

  /* selected elements */
  .elements {
    position: relative;
    display: flex;
    flex-direction: column;
    flex: none;
    box-sizing: border-box;
    width: 447px;
    padding-left: 7px;
  }
  .elements header {
    box-sizing: border-box;
    height: 44px;
    padding: 10px 5px 6px 3px;
  }
  .collapse {width: 4px; height: 8px; margin-top: -3px; fill: #666}
  .elements .toolbar {
    height: 26px;
    padding-left: 9px;
  }
  .elements .line {margin: 0 4px}
  .elements select {width: 116px; margin: 0 2px 0 1px}
  .img {
    padding-bottom: 4px;
    width: 20px;
    color: #000;
    font-size: 11px;
  }
  .preview {
    height: 272px;
    margin: 4px 1px 5px;
    background: #fff;
  }
  .preview svg {width: 438px; height: 272px}
  .preview text {font: 14px "Liberation Mono", monospace}
  .props {
    display: flex;
    flex: 1;
    min-height: 0;
    overflow: hidden;
    background: #fdfdfd;
    font: 11px "Roboto", sans-serif;
  }
  table {
    flex: 1;
    table-layout: fixed;
    width: 100%;
    border-collapse: collapse;
    align-self: flex-start;
  }
  th, td {
    box-sizing: border-box;
    height: 17px;
    padding: 0;
    line-height: 16px;
    text-align: left;
    white-space: nowrap;
  }
  td {border-bottom: 1px solid #e8e8e8}
  th {background: #efefef; color: #333; font-size: 13px; font-weight: 700}
  th svg {display: inline-block; width: 5px; height: 5px; margin: 0 8px 2px 7px; fill: #999}
  .gutter {width: 17px; background: #efefef; border-color: #efefef}
  .names {width: 203px}
  .name {padding-left: 3px; border-right: 1px solid #e8e8e8}
  .value {position: relative; padding-left: 4px}
  .name label {display: flex; align-items: center; gap: 6px}
  .name input[type="checkbox"] {width: 13px; height: 13px; margin-left: -1px}
  .current .name {background: #efefef}
  .off {color: #aaa}
  .more {
    position: absolute;
    right: 1px;
    top: 0;
    width: 16px;
    height: 15px;
    border: 1px solid #bbb;
    background: #e8e8e8;
    line-height: 11px;
  }
  .thumb {
    width: 2px;
    margin: 17px 1px 0 14px;
    background: #999;
  }
  .pointer-row {
    position: absolute;
    left: -57px;
    top: 430px;
    width: 84px;
    height: 30px;
  }
  .pointer-row path {stroke: #fb4740; stroke-width: 5; stroke-linecap: round}
  .pointer-row polygon {fill: #fb4740}
</style>
